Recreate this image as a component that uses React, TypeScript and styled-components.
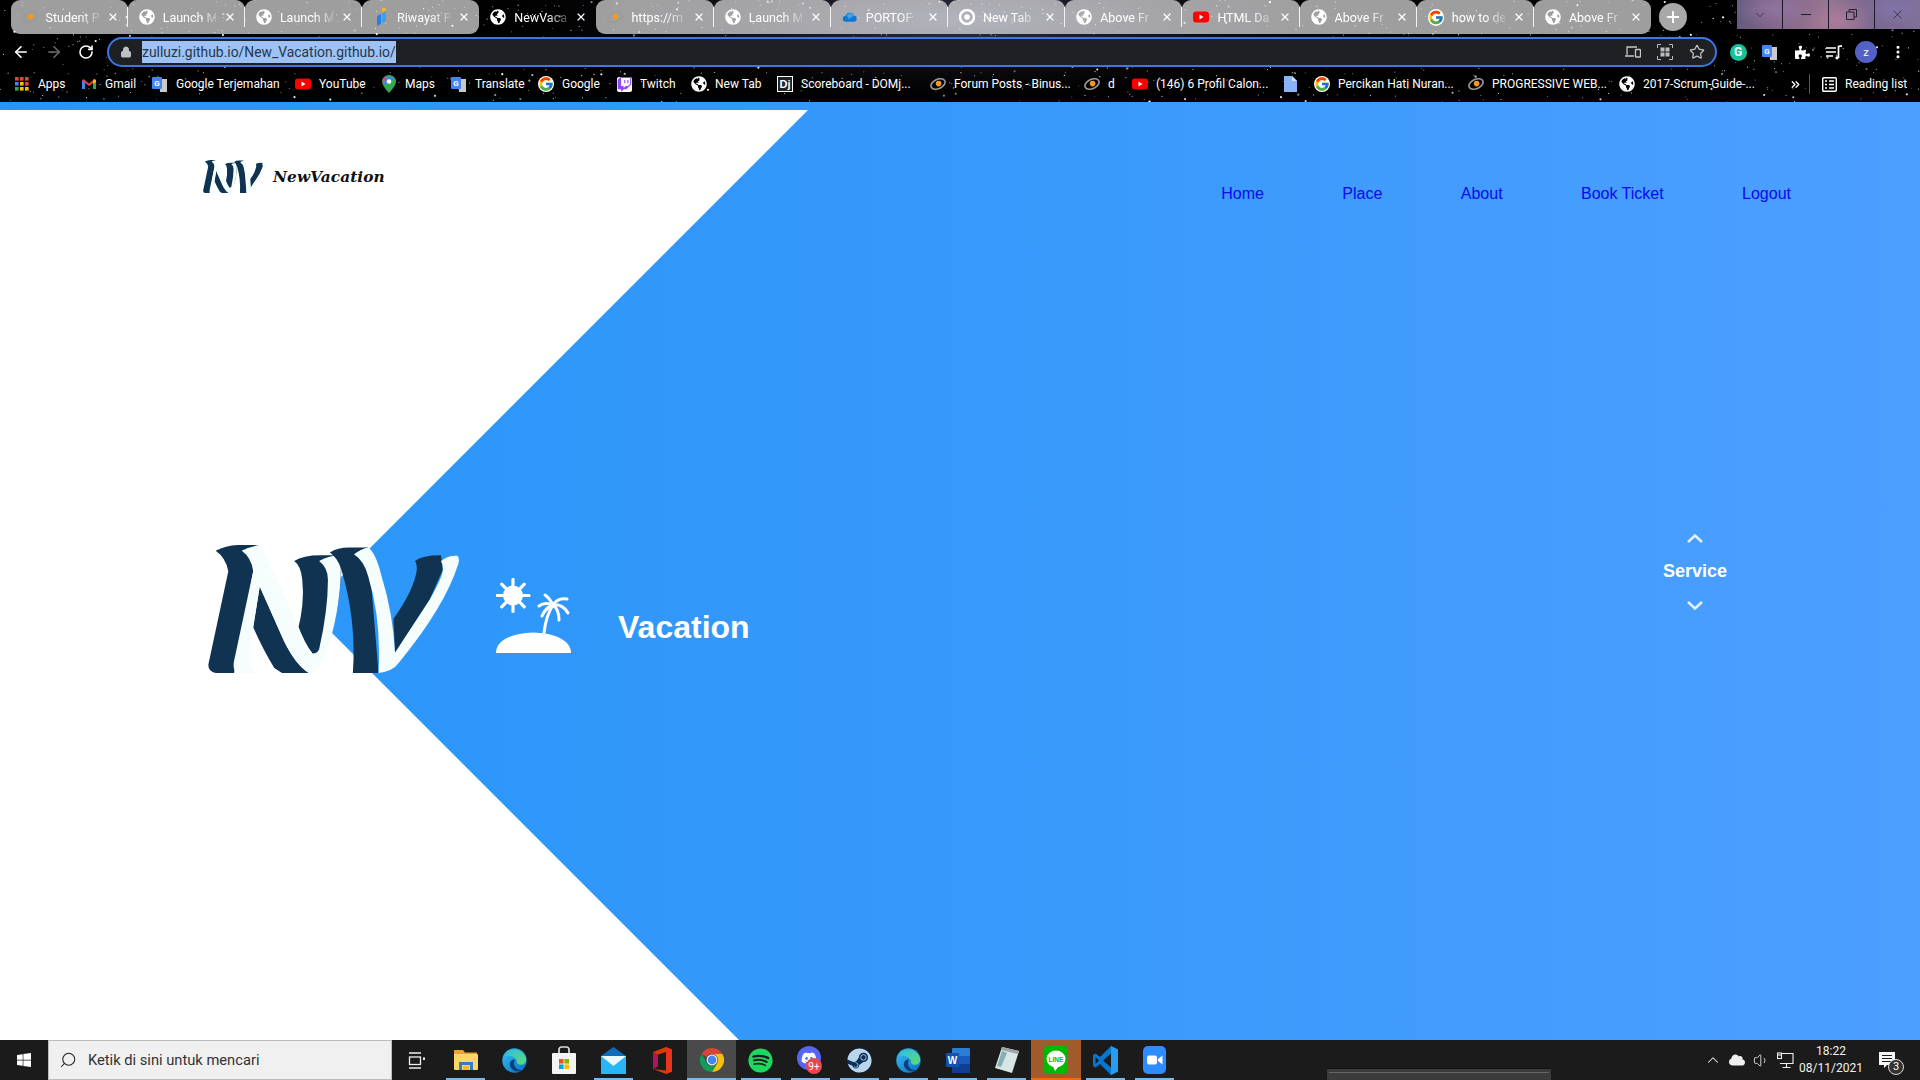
import React from 'react';
import styled, { createGlobalStyle } from 'styled-components';
import { ArrowLeft, ArrowRight, RotateCw, Lock, Star, X, Plus, ChevronUp, ChevronDown, ChevronsRight, Search, Volume1, EllipsisVertical } from 'lucide-react';
import { FaGlobeAmericas, FaWindows, FaSpotify, FaDiscord, FaSteam, FaTwitch, FaPuzzlePiece, FaCloud } from 'react-icons/fa';
import { FcGoogle } from 'react-icons/fc';

const Global = createGlobalStyle`
  html, body { margin: 0; padding: 0; overflow: hidden; background: #000; }
  * { box-sizing: border-box; }
`;

const Screen = styled.div`
  width: 1920px; height: 1080px; display: flex; flex-direction: column;
  font-family: Roboto, "Liberation Sans", sans-serif; overflow: hidden;
`;

/* ---------- browser chrome ---------- */
const Chrome = styled.header`
  position: relative; height: 102px; flex: none; background: #000; color: #fff; overflow: hidden;
`;
const Wallpaper = styled.svg`
  position: absolute; inset: 0; width: 1920px; height: 102px;
`;
const TabStrip = styled.div`
  position: relative; height: 34px; display: flex; align-items: flex-start; padding-left: 10.5px;
`;
const TabGroup = styled.div`
  display: flex; height: 34px;
`;
const Tab = styled.div<{ $active?: boolean }>`
  position: relative; flex: none; width: 117.2px; height: 34px; display: flex; align-items: center;
  padding: 0 9px 0 11px; gap: 8px; border-radius: 9px 9px 0 0;
  background: ${p => (p.$active ? 'transparent' : 'rgba(255,255,255,.62)')};
  &:first-child { border-bottom-left-radius: 9px; }
  &:last-child { border-bottom-right-radius: 9px; }
  &:not(:last-child)::after {
    content: ''; position: absolute; right: 0; top: 7px; height: 20px; width: 1px; background: #f2f2f2;
  }
`;
const TabTitle = styled.span`
  flex: 1; min-width: 0; white-space: nowrap; font-size: 12.5px; color: #fff;
  -webkit-mask-image: linear-gradient(90deg, #000 62%, rgba(0,0,0,.25) 100%);
  mask-image: linear-gradient(90deg, #000 62%, rgba(0,0,0,.25) 100%);
`;
const NewTab = styled.div`
  flex: none; width: 28px; height: 28px; margin: 3px 0 0 8px; border-radius: 50%;
  background: #a8a8a8; display: flex; align-items: center; justify-content: center;
`;
const WindowControls = styled.div`
  margin-left: auto; width: 183px; height: 29px; display: flex;
  background:
    radial-gradient(ellipse 40px 18px at 20% 30%, rgba(150,120,170,.7), transparent),
    radial-gradient(ellipse 36px 20px at 55% 70%, rgba(190,130,160,.6), transparent),
    radial-gradient(ellipse 30px 16px at 85% 30%, rgba(130,120,180,.7), transparent),
    linear-gradient(90deg, #665a7e, #85688c 22%, #95748f 50%, #7a6890 75%, #7f7098);
`;
const WindowButton = styled.div`
  flex: 1; display: flex; align-items: center; justify-content: center; color: #20202a;
  & + & { border-left: 1px solid #1d1a28; }
`;
const Toolbar = styled.div`
  position: relative; height: 36px; display: flex; align-items: center; padding: 0 6px 0 5px;
`;
const NavButton = styled.div<{ $dim?: boolean }>`
  width: 32.5px; display: flex; justify-content: center; color: ${p => (p.$dim ? '#6b6b6b' : '#fff')};
`;
const AddressBar = styled.div`
  flex: 1; height: 30px; margin-left: 4.5px; display: flex; align-items: center;
  padding: 0 6px 0 11px; background: #1f2023; border: 2px solid #3b78e7; border-radius: 15px;
`;
const LockBox = styled.span`
  display: flex; width: 12px; margin-right: 10px; color: #bdc1c6;
`;
const Url = styled.span`
  height: 22px; line-height: 22px; font-size: 13.88px; white-space: nowrap; background: #9cc2f6; color: #27364c;
`;
const AddressIcons = styled.div`
  margin-left: auto; display: flex; gap: 8px; color: #c4c7c5;
`;
const IconSlot = styled.div`
  width: 24px; height: 24px; display: flex; align-items: center; justify-content: center;
`;
const Extensions = styled.div`
  margin-left: 5px; display: flex;
`;
const ExtSlot = styled.div`
  width: 32px; display: flex; justify-content: center; align-items: center; color: #fff;
`;
const Avatar = styled.div`
  width: 22px; height: 22px; border-radius: 50%; background: #5361c4; color: #fff;
  font-size: 11px; display: flex; align-items: center; justify-content: center;
`;
const GrammarlyDot = styled.div`
  width: 17px; height: 17px; border-radius: 50%; background: #15c39a; color: #fff; font-size: 12px;
  font-weight: 700; display: flex; align-items: center; justify-content: center;
`;
const Bookmarks = styled.nav`
  position: relative; height: 32px; padding: 0 0 4px 14px; display: flex; align-items: center;
`;
const Bookmark = styled.div<{ $w: number }>`
  flex: none; width: ${p => p.$w}px; display: flex; align-items: center; gap: 8px;
  font-size: 12px; color: #fff; white-space: nowrap;
`;
const BookmarkIcon = styled.span`
  flex: none; width: 16px; height: 16px; display: flex; align-items: center; justify-content: center;
`;
const BookmarkDivider = styled.span`
  flex: none; width: 1px; height: 20px; background: #555; margin-right: 11px;
`;

/* ---------- page ---------- */
const Page = styled.main`
  position: relative; flex: 1; min-height: 0; overflow: hidden;
  background: linear-gradient(90deg, #2795f8 0%, #3699fb 50%, #4d9fff 100%);
`;
const WhiteWedge = styled.div`
  position: absolute; left: 0; top: 8px; bottom: 0; width: 808px; background: #fff;
  clip-path: polygon(0 0, 100% 0, 308.5px 499.5px, 739px 100%, 0 100%);
`;
const PageHeader = styled.div`
  position: relative; display: flex; justify-content: space-between; align-items: flex-start;
  padding: 58px 129px 0 203px;
`;
const Brand = styled.div`
  display: flex; align-items: center; gap: 6px;
`;
const BrandName = styled.span`
  font-family: "DejaVu Serif", "Liberation Serif", serif; font-style: italic; font-weight: 700;
  font-size: 15.3px; letter-spacing: .1px; color: #111;
`;
const NavList = styled.ul`
  list-style: none; margin: 25px 0 0; padding: 0; display: flex; gap: 78.4px;
`;
const NavLink = styled.a`
  font-family: "Liberation Sans", Arial, sans-serif; font-size: 16px; line-height: 18px; color: #0a0aee; display: block;
`;
const Hero = styled.section`
  position: relative; display: flex; align-items: flex-start; padding: 331px 193px 0 208px;
`;
const HeroLogo = styled.div`
  margin-top: 11px; display: flex;
`;
const HeroIcon = styled.div`
  margin: 44px 0 0 37px; display: flex;
`;
const HeroTitle = styled.h1`
  margin: 75px 0 0 47px; font-family: "Liberation Sans", Arial, sans-serif; font-size: 32px; line-height: 37px;
  font-weight: 700; color: #fff;
`;
const Service = styled.div`
  margin-left: auto; display: flex; flex-direction: column; align-items: center; color: #fff;
`;
const ServiceLabel = styled.span`
  font-family: "Liberation Sans", Arial, sans-serif; font-size: 18px; line-height: 22px; font-weight: 700; margin: 17px 0 19px;
`;
const ChevronMark = styled.svg` display: block; `;

/* ---------- taskbar ---------- */
const Taskbar = styled.footer`
  position: relative; flex: none; height: 40px; background: #1b1b1b; display: flex; color: #fff;
`;
const StartButton = styled.div`
  width: 48px; display: flex; align-items: center; justify-content: center;
`;
const SearchBox = styled.div`
  width: 344px; height: 40px; background: #f0f0f0; border: 1px solid #bcbcbc;
  display: flex; align-items: center; padding-left: 10px; gap: 11px; color: #333; font-size: 14.7px;
`;
const TaskSlot = styled.div<{ $state?: 'run' | 'split' | 'focus' | 'alert' }>`
  position: relative; flex: none; width: 49.2px; height: 40px; display: flex; align-items: center; justify-content: center;
  background: ${p => (p.$state === 'focus' ? '#4a4a4a' : p.$state === 'alert' ? '#a15a2b' : 'transparent')};
  &::after {
    content: ''; position: absolute; bottom: 0; height: 2px;
    display: ${p => (p.$state ? 'block' : 'none')};
    left: ${p => (p.$state === 'focus' || p.$state === 'alert' ? '0' : '5px')};
    right: ${p => (p.$state === 'focus' || p.$state === 'alert' ? '0' : '5px')};
    background: ${p => (p.$state === 'alert' ? '#f76a0a' : '#76b9ed')};
  }
`;
const Tray = styled.div`
  margin-left: auto; display: flex; align-items: center; padding-right: 11px;
`;
const TraySlot = styled.div`
  width: 24px; display: flex; justify-content: center; color: #eee;
`;
const Clock = styled.div`
  width: 68px; text-align: center; font-size: 12px; line-height: 17px; color: #f2f2f2;
`;
const Notify = styled.div`
  position: relative; width: 44px; display: flex; justify-content: center;
`;
const NotifyBadge = styled.span`
  position: absolute; left: 23px; top: 7px; width: 16px; height: 16px; border-radius: 50%;
  border: 1px solid #ddd; background: #333; color: #fff; font-size: 11px; line-height: 14px; text-align: center;
`;
const Peek = styled.div`
  position: absolute; left: 1327px; top: 28px; width: 224px; height: 12px; background: #3b3b3b; border-top: 1px solid #111;
  &::after { content: ''; position: absolute; left: 2px; right: 2px; top: 3px; height: 1px; background: #666; }
`;
const IconSlotSmall = styled.span`
  flex: none; width: 16px; height: 16px; display: flex; align-items: center; justify-content: center;
`;

/* ---------- drawings ---------- */
function makeStars() {
  let s = 12345;
  const rnd = () => { s = (s * 16807) % 2147483647; return s / 2147483647; };
  const out: { x: number; y: number; r: number; o: number }[] = [];
  for (let i = 0; i < 900; i++) {
    out.push({ x: rnd() * 1920, y: rnd() * 102, r: rnd() < 0.15 ? 1.1 : 0.55, o: 0.35 + rnd() * 0.65 });
  }
  return out;
}
const STARS = makeStars();

const Sky = () => (
  <Wallpaper viewBox="0 0 1920 102">
    <defs>
      <radialGradient id="neb" cx="50%" cy="50%" r="50%">
        <stop offset="0%" stopColor="#4a4a6c" stopOpacity=".75" />
        <stop offset="100%" stopColor="#000" stopOpacity="0" />
      </radialGradient>
    </defs>
    <ellipse cx="960" cy="20" rx="520" ry="90" fill="url(#neb)" />
    {STARS.map((t, i) => <circle key={i} cx={t.x} cy={t.y} r={t.r} fill="#fff" opacity={t.o} />)}
  </Wallpaper>
);

const NVLogo = ({ w, h }: { w: number; h: number }) => {
  const dark = '#0f3350';
  const light = '#f6fdfd';
  return (
    <svg width={w} height={h} viewBox="72 78 655 377" preserveAspectRatio="none">
      <path fill={dark} d="M92 95Q118 80 150 78L205 78L190 155L140 455L92 455Q72 450 73 430L125 155Q118 115 92 95Z" />
      <path fill={dark} d="M207 200L190 320Q215 385 245 440L265 455L335 455Q300 430 270 360Z" />
      <path fill={dark} d="M297 125Q320 108 365 108L420 108L420 150Q415 280 385 370Q375 395 345 398Q325 370 305 335Q325 250 318 180Q315 140 297 125Z" />
      <path fill={light} d="M160 95Q175 85 205 78Q215 85 225 115L305 310Q325 370 345 398Q355 400 362 385Q385 270 385 180Q385 145 362 125Q385 110 415 108Q420 130 418 180Q410 320 370 420Q360 445 340 455L335 455Q300 430 270 360L207 200L190 320L178 400Q180 440 195 455L150 455Q135 450 140 420L190 155Q185 115 160 95Z" />
      <path fill={dark} d="M390 100Q410 85 440 85L490 85L517 455L450 455Q460 300 420 150Q410 115 390 100Z" />
      <path fill={dark} d="M612 125Q630 108 680 108L685 150L650 240L560 395L556 295Q610 210 617 150Q617 130 612 125Z" />
      <path fill={light} d="M453 105Q470 90 490 85Q510 100 525 170Q555 280 560 395L650 240Q685 170 685 150Q685 135 680 125Q700 108 722 110Q730 115 725 135Q690 260 570 425Q555 450 517 455Q525 300 490 170Q480 125 453 105Z" />
    </svg>
  );
};

const IslandIcon = () => (
  <svg width="75" height="76" viewBox="0 0 75 76" fill="none" stroke="#fff" strokeLinecap="round">
    <circle cx="17" cy="17.5" r="10" fill="#fff" stroke="none" />
    <g strokeWidth="3.2">
      <path d="M17 1.5V7M17 28V33.5M1 17.5H6.5M27.5 17.5H33M5.7 6.2L9.6 10.1M24.4 24.9L28.3 28.8M5.7 28.8L9.6 24.9M24.4 10.1L28.3 6.2" />
    </g>
    <path d="M0 75C0 62 16 55 37 54.500C58 55 75 62 75 75Z" fill="#fff" stroke="none" />
    <g strokeWidth="3">
      <path d="M48 55C49 46 51 36 57 27" />
      <path d="M57 27C55 23 52 19 49 17" />
      <path d="M57 27C60 22 65 20 71 21" />
      <path d="M57 27C63 26 69 29 72 35" />
      <path d="M57 27C61 30 63 36 63 42" />
      <path d="M57 27C52 25 47 25 43 28" />
      <path d="M57 27C52 29 48 33 46 38" />
    </g>
  </svg>
);

const Globe = ({ s = 16 }: { s?: number }) => <FaGlobeAmericas size={s} color="#fff" />;
const G = () => <FcGoogle size={16} style={{ background: '#fff', borderRadius: '50%' }} />;
const GBig = () => <FcGoogle size={17} style={{ background: '#fff', borderRadius: '50%' }} />;
const Eye = () => (
  <svg width="16" height="16" viewBox="0 0 16 16">
    <ellipse cx="8" cy="8" rx="7.5" ry="4.6" fill="none" stroke="#9a9a9a" strokeWidth="1.6" transform="rotate(-25 8 8)" />
    <circle cx="8.6" cy="7.6" r="2.8" fill="#f29a1f" />
  </svg>
);
const YT = () => (
  <svg width="16" height="16" viewBox="0 0 16 16"><rect y="2.500" width="16" height="11" rx="3" fill="#f00" /><path d="M6.500 5.500L10.500 8L6.500 10.500Z" fill="#fff" /></svg>
);
const Gmail = () => (
  <svg width="16" height="16" viewBox="0 0 16 16">
    <path d="M1 13V4l3 2v7z" fill="#4285f4" /><path d="M12 13V6l3-2v9z" fill="#34a853" />
    <path d="M1 4.500L2.500 3 8 7.500 13.500 3 15 4.500 8 10z" fill="#ea4335" /><path d="M13 3l2 1v2l-3 2V5z" fill="#fbbc04" />
  </svg>
);
const Translate = () => (
  <svg width="16" height="17" viewBox="0 0 16 17">
    <path d="M7 3H15V16H8Z" fill="#c9c9c9" /><rect x="0" y="1" width="10" height="12" rx="1" fill="#4285f4" />
    <text x="5" y="10" fontSize="8" fontWeight="700" fill="#fff" textAnchor="middle" fontFamily="Roboto">G</text>
  </svg>
);
const Pin = () => (
  <svg width="14" height="18" viewBox="0 0 14 18">
    <path d="M7 0C3 0 0 3 0 6.500C0 11 7 18 7 18S14 11 14 6.500C14 3 11 0 7 0Z" fill="#34a853" />
    <path d="M2 2L12 2.500L9 8L2 9Z" fill="#4285f4" /><path d="M0 6.500L2 2L5 5Z" fill="#ea4335" />
    <circle cx="7" cy="6.500" r="2.300" fill="#fff" />
  </svg>
);
const AppsGrid = () => (
  <svg width="14" height="14" viewBox="0 0 14 14">
    {[0, 5, 10].map((y, r) => [0, 5, 10].map((x, c) => (
      <rect key={`${r}${c}`} x={x} y={y} width="3.6" height="3.6"
        fill={[['#ea4335', '#ea4335', '#ea4335'], ['#4285f4', '#fbbc04', '#ea4335'], ['#34a853', '#fbbc04', '#fbbc04']][r][c]} />
    )))}
  </svg>
);
const Dj = () => (
  <svg width="16" height="16" viewBox="0 0 16 16"><rect width="16" height="16" fill="#fff" /><rect x="1" y="1" width="14" height="14" fill="#222" />
    <text x="8" y="12" fontSize="11" fontWeight="700" fill="#fff" textAnchor="middle" fontFamily="Liberation Sans">Dj</text></svg>
);
const FileIcon = () => (
  <svg width="13" height="16" viewBox="0 0 13 16"><path d="M0 0H8L13 5V16H0Z" fill="#8ab4f8" /><path d="M8 0L13 5H8Z" fill="#d2e3fc" /></svg>
);
const ReadingList = () => (
  <svg width="15" height="15" viewBox="0 0 15 15" fill="none" stroke="#fff" strokeWidth="1.4">
    <rect x=".7" y=".7" width="13.600" height="13.600" rx="1" /><path d="M3 4H5M7 4H12M3 7.500H5M7 7.500H12M3 11H5M7 11H12" />
  </svg>
);
const Cloud = () => (
  <svg width="17" height="12" viewBox="0 0 17 12"><path d="M4 11a3 3 0 0 1-.4-6A5 5 0 0 1 13 4.500a3.300 3.300 0 0 1 0 6.500Z" fill="#0f78d4" /><path d="M5 4.500A4.500 4.500 0 0 1 13 4.500L7 8Z" fill="#41a5ee" /></svg>
);
const Devices = () => (
  <svg width="16" height="14" viewBox="0 0 16 14" fill="none" stroke="#c4c7c5" strokeWidth="1.300"><path d="M2 10V2H12M0 11H9" /><rect x="10.500" y="4.500" width="5" height="7.500" rx=".6" /></svg>
);
const QR = () => (
  <svg width="16" height="16" viewBox="0 0 16 16" fill="none" stroke="#bbb" strokeWidth="1"><path d="M.5 4V.5H4M12 .5H15.500V4M15.500 12V15.500H12M4 15.500H.5V12" /><g fill="#bbb" stroke="none"><rect x="3.500" y="3.500" width="4" height="4" /><rect x="8.500" y="3.500" width="4" height="4" /><rect x="3.500" y="8.500" width="4" height="4" /><rect x="8.500" y="8.500" width="4" height="4" /></g></svg>
);
const MediaList = () => (
  <svg width="17" height="15" viewBox="0 0 17 15" fill="none" stroke="#fff" strokeWidth="1.700"><path d="M0 3H10M0 7H10M0 11H7M12.500 13V1.500L16 .8" /><circle cx="11" cy="12.800" r="1.600" fill="#fff" stroke="none" /></svg>
);

const Explorer = () => (
  <svg width="24" height="22" viewBox="0 0 24 22">
    <path d="M0 1H9L11 3.500H23V6H0Z" fill="#e7a52f" /><rect y="5" width="24" height="16" rx="1" fill="#fcd768" />
    <path d="M5 13H19V21H16V16H8V21H5Z" fill="#2f7ec8" /><rect x="9" y="17" width="6" height="4" fill="#f3b73c" />
  </svg>
);
const Edge = () => (
  <svg width="25" height="25" viewBox="0 0 25 25">
    <defs><linearGradient id="eg" x1="0" y1="0" x2="1" y2="1"><stop offset="0" stopColor="#35c1f1" /><stop offset="1" stopColor="#0a6cc4" /></linearGradient>
      <linearGradient id="eh" x1="0" y1="0" x2="1" y2="1"><stop offset="0" stopColor="#2fbfe8" /><stop offset="1" stopColor="#5fdc6a" /></linearGradient></defs>
    <circle cx="12.500" cy="12.500" r="12.200" fill="url(#eg)" />
    <path d="M3 8C6 1 16 -1 22 6C25 10 25 15 21 16.500C17 17.500 14.500 16 15 13.500C15 10 9 7 3 8Z" fill="url(#eh)" />
    <path d="M13 11.500C8 11 6 17 10 21C13 24 18 24.300 21 22C15 23 10 18 13 11.500Z" fill="#0c3f7a" />
  </svg>
);
const StoreIcon = () => (
  <svg width="24" height="28" viewBox="0 0 24 28">
    <path d="M7 7V3.500A2.500 2.500 0 0 1 9.500 1H14.500A2.500 2.500 0 0 1 17 3.500V7" fill="none" stroke="#ddd" strokeWidth="1.700" />
    <rect y="7" width="24" height="21" rx="1" fill="#f4f4f4" />
    <rect x="7" y="13" width="4.600" height="4.600" fill="#f25022" /><rect x="12.400" y="13" width="4.600" height="4.600" fill="#7fba00" />
    <rect x="7" y="18.400" width="4.600" height="4.600" fill="#00a4ef" /><rect x="12.400" y="18.400" width="4.600" height="4.600" fill="#ffb900" />
  </svg>
);
const Mail = () => (
  <svg width="25" height="27" viewBox="0 0 25 27">
    <path d="M0 9L12.500 0L25 9V26H0Z" fill="#0f6cbd" /><rect y="9" width="25" height="18" fill="#29b6f6" />
    <path d="M0 9H25L12.500 19Z" fill="#e9f7ff" />
  </svg>
);
const Office = () => (
  <svg width="19" height="27" viewBox="0 0 19 27">
    <path d="M0 5L13 0L19 2.500V24.500L13 27L0 22L13 23.500V5L5 7.500V19L0 22Z" fill="#d83b01" />
    <path d="M0 22L5 19V7.500L0 5Z" fill="#b4125c" /><path d="M13 0L19 2.500V24.500L13 27Z" fill="#e8341c" />
  </svg>
);
const ChromeIcon = () => (
  <svg width="24" height="24" viewBox="-12 -12 24 24">
    <path d="M0-12A12 12 0 0 1 10.400-6H0A6 6 0 0 0-5.200-3L-10.400-6A12 12 0 0 1 0-12Z" fill="#db4437" />
    <path d="M10.400-6A12 12 0 0 1 0 12L5.200 3A6 6 0 0 0 0-6Z" fill="#f4c20d" />
    <path d="M-10.400-6L-5.200 3A6 6 0 0 0 5.200 3L0 12A12 12 0 0 1-10.400-6Z" fill="#0f9d58" />
    <circle r="5.400" fill="#fff" /><circle r="4.400" fill="#4285f4" />
  </svg>
);
const DiscordIcon = () => (
  <svg width="26" height="30" viewBox="0 0 26 30">
    <circle cx="12" cy="13" r="12" fill="#5865f2" />
    <g transform="translate(4 5)"><FaDiscord size={16} color="#fff" /></g>
    <circle cx="17" cy="21" r="8" fill="#e8484b" />
    <text x="17" y="25" fontSize="10" fill="#fff" textAnchor="middle" fontFamily="Roboto">9+</text>
  </svg>
);
const Word = () => (
  <svg width="24" height="25" viewBox="0 0 24 25">
    <rect x="6" y="0" width="18" height="25" rx="1" fill="#2b7cd3" /><rect x="6" y="8" width="18" height="8" fill="#185abd" /><rect x="6" y="16" width="18" height="9" fill="#103f91" />
    <rect x="0" y="5" width="13" height="14" rx="1" fill="#1352b0" />
    <text x="6.500" y="16" fontSize="10" fontWeight="700" fill="#fff" textAnchor="middle" fontFamily="Liberation Sans">W</text>
  </svg>
);
const Notepad = () => (
  <svg width="24" height="28" viewBox="0 0 24 28">
    <path d="M7 1L24 5L17 27L0 22Z" fill="#d9e4e4" /><path d="M7 1L24 5L23 8L6 4Z" fill="#9ea7a7" />
    <path d="M2 20L7 5L12 7L6 21Z" fill="#5d9aa0" opacity=".7" />
  </svg>
);
const Line = () => (
  <svg width="24" height="28" viewBox="0 0 24 28">
    <rect width="24" height="28" rx="4" fill="#00b900" />
    <ellipse cx="12" cy="13" rx="9.500" ry="8.500" fill="#fff" /><path d="M9 20L11 25L15 20Z" fill="#fff" />
    <text x="12" y="15.500" fontSize="6.500" fontWeight="700" fill="#00b900" textAnchor="middle" fontFamily="Liberation Sans">LINE</text>
  </svg>
);
const VSCode = () => (
  <svg width="25" height="29" viewBox="0 0 25 29">
    <path d="M18 0L25 3.500V25.500L18 29L7 18L2.500 21.500L0 20V9L2.500 7.500L7 11Z" fill="#0078d4" />
    <path d="M18 7.500L10 14.500L18 21.500Z" fill="#1b1b1b" /><path d="M2.500 11V18L6 14.500Z" fill="#1b1b1b" />
    <path d="M18 0L25 3.500V25.500L18 29Z" fill="#2b9bf0" />
  </svg>
);
const ZoomIcon = () => (
  <svg width="23" height="28" viewBox="0 0 23 28">
    <rect width="23" height="28" rx="5" fill="#2d8cff" /><rect x="4" y="9.500" width="10" height="9" rx="2" fill="#fff" />
    <path d="M15 13L19.500 9.500V18.500L15 15Z" fill="#fff" />
  </svg>
);
const NetworkIcon = () => (
  <svg width="17" height="17" viewBox="0 0 17 17" fill="none" stroke="#eee" strokeWidth="1.100">
    <path d="M3 1.500H16V11.500H3M9.500 11.500V15M5.500 15.500H13.500" /><rect x=".5" y="1" width="4" height="5.500" fill="#1b1b1b" /><path d="M1 3H4" />
  </svg>
);
const NotifyIcon = () => (
  <svg width="16" height="17" viewBox="0 0 16 17"><path d="M0 0H16V13H8L5 16V13H0Z" fill="#f5f5f5" /><path d="M3 3.500H13M3 6.500H13M3 9.500H13" stroke="#1b1b1b" strokeWidth="1" /></svg>
);

type TabData = { title: string; icon: React.ReactNode; active?: boolean };
const groupA: TabData[] = [
  { title: 'Student P', icon: <Eye /> },
  { title: 'Launch M', icon: <Globe /> },
  { title: 'Launch M', icon: <Globe /> },
  { title: 'Riwayat P', icon: <svg width="16" height="18" viewBox="0 0 16 18"><path d="M4 8L8 6V16L4 18Z" fill="#2b7de9" /><path d="M9 4L13 2V13L9 15Z" fill="#3aa0f0" /><path d="M9 0L13 0V3L9 5Z" fill="#f5b32a" /></svg> },
];
const groupB: TabData[] = [
  { title: 'https://m', icon: <Eye /> },
  { title: 'Launch M', icon: <Globe /> },
  { title: 'PORTOF', icon: <Cloud /> },
  { title: 'New Tab', icon: <svg width="16" height="16" viewBox="0 0 16 16"><circle cx="8" cy="8" r="7" fill="none" stroke="#fff" strokeWidth="2.400" /><circle cx="8" cy="8" r="2.800" fill="#fff" /></svg> },
  { title: 'Above Fr', icon: <Globe /> },
  { title: 'HTML Da', icon: <YT /> },
  { title: 'Above Fr', icon: <Globe /> },
  { title: 'how to de', icon: <GBig /> },
  { title: 'Above Fr', icon: <Globe /> },
];

const bookmarks: { label: string; w: number; icon: React.ReactNode }[] = [
  { label: 'Apps', w: 67, icon: <AppsGrid /> },
  { label: 'Gmail', w: 71, icon: <Gmail /> },
  { label: 'Google Terjemahan', w: 143, icon: <Translate /> },
  { label: 'YouTube', w: 86, icon: <YT /> },
  { label: 'Maps', w: 70, icon: <Pin /> },
  { label: 'Translate', w: 87, icon: <Translate /> },
  { label: 'Google', w: 78, icon: <G /> },
  { label: 'Twitch', w: 75, icon: <FaTwitch size={15} color="#9146ff" style={{ background: '#fff', borderRadius: 2 }} /> },
  { label: 'New Tab', w: 86, icon: <Globe /> },
  { label: 'Scoreboard - DOMj...', w: 153, icon: <Dj /> },
  { label: 'Forum Posts - Binus...', w: 154, icon: <Eye /> },
  { label: 'd', w: 48, icon: <Eye /> },
  { label: '(146) 6 Profil Calon...', w: 150, icon: <YT /> },
  { label: '', w: 32, icon: <FileIcon /> },
  { label: 'Percikan Hati Nuran...', w: 154, icon: <G /> },
  { label: 'PROGRESSIVE WEB...', w: 151, icon: <Eye /> },
  { label: '2017-Scrum-Guide-...', w: 170, icon: <Globe /> },
];

type TaskItem = { icon: React.ReactNode; state?: 'run' | 'split' | 'focus' | 'alert' };
const taskItems: TaskItem[] = [
  { icon: <svg width="17" height="17" viewBox="0 0 17 17" fill="none" stroke="#eee" strokeWidth="1.300"><path d="M1 1H13M1 16H13" /><rect x="1.500" y="5" width="11" height="7.500" /><rect x="15" y="5.500" width="2" height="2.500" fill="#eee" stroke="none" /></svg> },
  { icon: <Explorer />, state: 'split' },
  { icon: <Edge /> },
  { icon: <StoreIcon /> },
  { icon: <Mail />, state: 'run' },
  { icon: <Office /> },
  { icon: <ChromeIcon />, state: 'focus' },
  { icon: <FaSpotify size={25} color="#1ed760" />, state: 'run' },
  { icon: <DiscordIcon />, state: 'split' },
  { icon: <FaSteam size={25} color="#b9d6ee" style={{ background: '#0c2f55', borderRadius: '50%' }} />, state: 'run' },
  { icon: <Edge />, state: 'split' },
  { icon: <Word />, state: 'run' },
  { icon: <Notepad />, state: 'run' },
  { icon: <Line />, state: 'alert' },
  { icon: <VSCode />, state: 'run' },
  { icon: <ZoomIcon />, state: 'run' },
];

const TabView = ({ t }: { t: TabData }) => (
  <Tab $active={t.active}>
    <IconSlotSmall>{t.icon}</IconSlotSmall>
    <TabTitle>{t.title}</TabTitle>
    <X size={12} color="#fff" strokeWidth={2.4} />
  </Tab>
);

export default function App() {
  return (
    <Screen>
      <Global />
      <Chrome>
        <Sky />
        <TabStrip>
          <TabGroup>{groupA.map((t, i) => <TabView key={i} t={t} />)}</TabGroup>
          <TabGroup><TabView t={{ title: 'NewVacat', icon: <Globe />, active: true }} /></TabGroup>
          <TabGroup>{groupB.map((t, i) => <TabView key={i} t={t} />)}</TabGroup>
          <NewTab><Plus size={18} color="#fff" strokeWidth={2.6} /></NewTab>
          <WindowControls>
            <WindowButton><ChevronDown size={14} strokeWidth={1.2} /></WindowButton>
            <WindowButton><svg width="10" height="1"><rect width="10" height="1" fill="#20202a" /></svg></WindowButton>
            <WindowButton><svg width="11" height="11" fill="none" stroke="#20202a"><path d="M.5 3V10.500H8V3ZM3 3V.5H10.500V8H8" /></svg></WindowButton>
            <WindowButton><X size={15} strokeWidth={1.1} /></WindowButton>
          </WindowControls>
        </TabStrip>
        <Toolbar>
          <NavButton><ArrowLeft size={18} strokeWidth={2.2} /></NavButton>
          <NavButton $dim><ArrowRight size={18} strokeWidth={2.2} /></NavButton>
          <NavButton><RotateCw size={16} strokeWidth={2.4} /></NavButton>
          <AddressBar>
            <LockBox><Lock size={12} fill="#bdc1c6" strokeWidth={2} /></LockBox>
            <Url>zulluzi.github.io/New_Vacation.github.io/</Url>
            <AddressIcons>
              <IconSlot><Devices /></IconSlot>
              <IconSlot><QR /></IconSlot>
              <IconSlot><Star size={16} strokeWidth={1.8} /></IconSlot>
            </AddressIcons>
          </AddressBar>
          <Extensions>
            <ExtSlot><GrammarlyDot>G</GrammarlyDot></ExtSlot>
            <ExtSlot><Translate /></ExtSlot>
            <ExtSlot><FaPuzzlePiece size={15} /></ExtSlot>
            <ExtSlot><MediaList /></ExtSlot>
            <ExtSlot><Avatar>z</Avatar></ExtSlot>
            <ExtSlot><EllipsisVertical size={16} strokeWidth={2.6} /></ExtSlot>
          </Extensions>
        </Toolbar>
        <Bookmarks>
          {bookmarks.map((b, i) => (
            <Bookmark key={i} $w={b.w}><BookmarkIcon>{b.icon}</BookmarkIcon>{b.label}</Bookmark>
          ))}
          <Bookmark $w={20}><ChevronsRight size={13} strokeWidth={2.4} /></Bookmark>
          <BookmarkDivider />
          <Bookmark $w={100}><BookmarkIcon><ReadingList /></BookmarkIcon>Reading list</Bookmark>
        </Bookmarks>
      </Chrome>

      <Page>
        <WhiteWedge />
        <PageHeader>
          <Brand>
            <NVLogo w={64} h={33} />
            <BrandName>NewVacation</BrandName>
          </Brand>
          <NavList>
            {['Home', 'Place', 'About', 'Book Ticket', 'Logout'].map(n => (
              <li key={n}><NavLink>{n}</NavLink></li>
            ))}
          </NavList>
        </PageHeader>
        <Hero>
          <HeroLogo><NVLogo w={251} h={128} /></HeroLogo>
          <HeroIcon><IslandIcon /></HeroIcon>
          <HeroTitle>Vacation</HeroTitle>
          <Service>
            <ChevronMark width="16" height="9" viewBox="0 0 16 9" fill="none" stroke="#fff" strokeOpacity=".85" strokeWidth="2.5"><path d="M1 8L8 1.500L15 8" /></ChevronMark>
            <ServiceLabel>Service</ServiceLabel>
            <ChevronMark width="16" height="9" viewBox="0 0 16 9" fill="none" stroke="#fff" strokeOpacity=".85" strokeWidth="2.5"><path d="M1 1L8 7.500L15 1" /></ChevronMark>
          </Service>
        </Hero>
      </Page>

      <Taskbar>
        <StartButton><FaWindows size={16} color="#fff" /></StartButton>
        <SearchBox><Search size={18} strokeWidth={1.4} color="#222" style={{ transform: 'scaleX(-1)' }} />Ketik di sini untuk mencari</SearchBox>
        {taskItems.map((t, i) => <TaskSlot key={i} $state={t.state}>{t.icon}</TaskSlot>)}
        <Peek />
        <Tray>
          <TraySlot><ChevronUp size={18} strokeWidth={1.4} /></TraySlot>
          <TraySlot><FaCloud size={16} color="#eee" /></TraySlot>
          <TraySlot><Volume1 size={17} strokeWidth={1.2} /></TraySlot>
          <TraySlot><NetworkIcon /></TraySlot>
          <Clock>18:22<br />08/11/2021</Clock>
          <Notify><NotifyIcon /><NotifyBadge>3</NotifyBadge></Notify>
        </Tray>
      </Taskbar>
    </Screen>
  );
}
